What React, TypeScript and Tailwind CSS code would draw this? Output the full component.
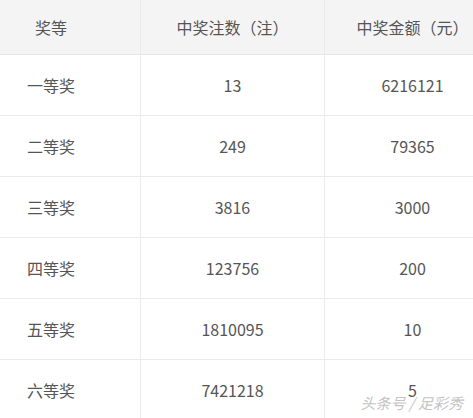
const rows = [
  ['一等奖', '13', '6216121'],
  ['二等奖', '249', '79365'],
  ['三等奖', '3816', '3000'],
  ['四等奖', '123756', '200'],
  ['五等奖', '1810095', '10'],
  ['六等奖', '7421218', '5'],
];

export default function App() {
  return (
    <div
      className="relative w-[473px] h-[418px] overflow-hidden bg-white text-[16px] text-[#555]"
      style={{ fontFamily: '"Noto Sans CJK SC", "Noto Sans", sans-serif' }}
    >
      <div className="ml-[-38px] w-[538px]">
        {/* header */}
        <div className="grid grid-cols-[178px_184px_176px] h-[55px] bg-[#f4f4f4] border-b border-[#e6e6e6]">
          <div className="flex items-center justify-center">奖等</div>
          <div className="flex items-center justify-center border-l border-[#ebebeb]">中奖注数（注）</div>
          <div className="flex items-center justify-center border-l border-[#ebebeb]">中奖金额（元）</div>
        </div>
        {rows.map((r) => (
          <div key={r[0]} className="grid grid-cols-[178px_184px_176px] h-[61px] border-b border-[#ebebeb]">
            <div className="flex items-center justify-center">{r[0]}</div>
            <div className="flex items-center justify-center border-l border-[#ebebeb]">{r[1]}</div>
            <div className="flex items-center justify-center border-l border-[#ebebeb]">{r[2]}</div>
          </div>
        ))}
      </div>
      <div
        className="absolute right-[10px] bottom-[4px] text-[15px] italic text-[#c4c4c4]"
        style={{ textShadow: '0 0 2px #fff' }}
      >
        头条号 / 足彩秀
      </div>
    </div>
  );
}
